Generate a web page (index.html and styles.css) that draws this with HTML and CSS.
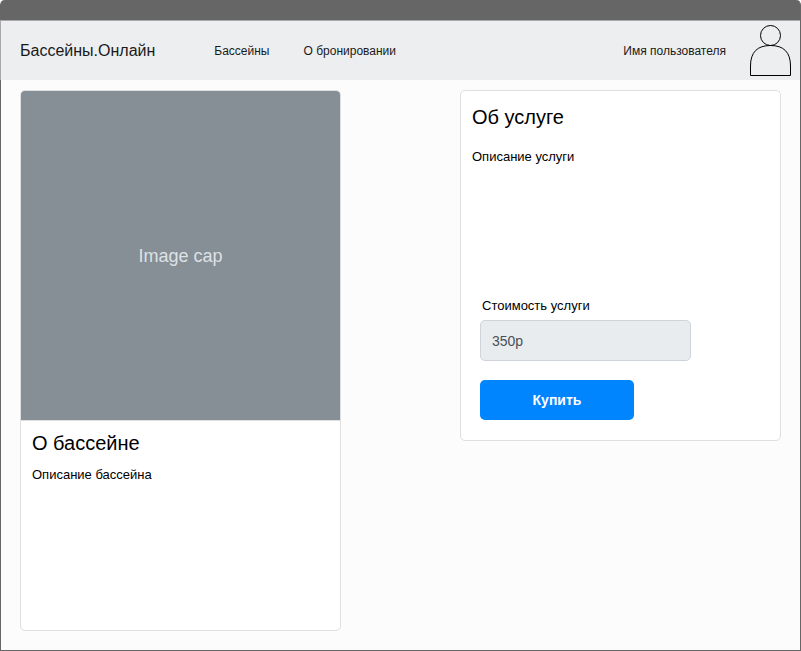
FILE: index.html
```html
<!DOCTYPE html>
<html lang="ru">
<head>
<meta charset="utf-8">
<meta name="viewport" content="width=device-width, initial-scale=1">
<title>Бассейны.Онлайн</title>
<link rel="stylesheet" href="styles.css">
</head>
<body>
<div class="window">
  <div class="titlebar"></div>
  <header class="navbar">
    <a class="brand" href="#">Бассейны.Онлайн</a>
    <nav class="menu">
      <a href="#">Бассейны</a>
      <a href="#">О бронировании</a>
    </nav>
    <a class="user" href="#">
      <span>Имя пользователя</span>
      <svg class="avatar" viewBox="0 0 41 51" width="41" height="51" fill="none" stroke="#000" aria-hidden="true">
        <circle cx="20.500" cy="10.500" r="10"/>
        <path d="M.5 50.500V41C.5 27 7.500 20.500 20.500 20.500S40.500 27 40.500 41V50.500Z"/>
      </svg>
    </a>
  </header>
  <main class="content">
    <article class="card pool">
      <div class="cover">Image cap</div>
      <div class="pool-body">
        <h2>О бассейне</h2>
        <p>Описание бассейна</p>
      </div>
    </article>
    <section class="card service">
      <h2>Об услуге</h2>
      <p class="description">Описание услуги</p>
      <form class="order">
        <label for="price">Стоимость услуги</label>
        <input id="price" type="text" value="350р" readonly>
        <button type="button">Купить</button>
      </form>
    </section>
  </main>
</div>
</body>
</html>
```
FILE: styles.css
```css
* {
  box-sizing: border-box;
}

body {
  margin: 0;
  background: #fff;
  color: #000;
  font: 13px/20px "Liberation Sans", Arial, sans-serif;
}

a {
  color: inherit;
  text-decoration: none;
}

h2,
p {
  margin: 0;
}

h2 {
  font-size: 20px;
  font-weight: 400;
  line-height: 24px;
}

.window {
  display: flex;
  flex-direction: column;
  min-height: 100vh;
  border: 1px solid #666;
  border-top: 0;
  border-radius: 5px 5px 0 0;
  background: #fcfcfc;
}

.titlebar {
  height: 20px;
  border-radius: 4px 4px 0 0;
  background: #666;
}

.navbar {
  display: flex;
  align-items: center;
  height: 60px;
  margin-left: -1px;
  padding: 0 9px 0 19px;
  border: solid #a9a9ab;
  border-width: 1px 0 0 1px;
  background: #edeef0;
  color: #1a1a1a;
  font-size: 12px;
}

.brand {
  font-size: 16px;
}

.menu {
  display: flex;
  gap: 34px;
  margin-left: 59px;
}

.user {
  display: flex;
  align-items: center;
  gap: 24px;
  margin-left: auto;
}

.avatar {
  display: block;
}

.content {
  display: grid;
  flex: 1;
  grid-template-columns: 1fr 1fr;
  gap: 119px;
  padding: 10px 19px 19px;
}

.card {
  border: 1px solid #dfdfdf;
  border-radius: 5px;
  background: #fff;
}

.pool {
  overflow: hidden;
}

.cover {
  display: flex;
  align-items: center;
  justify-content: center;
  height: 330px;
  border-bottom: 1px solid #dfdfdf;
  background: #868e96;
  color: #dee2e6;
  font-size: 18px;
}

.pool-body {
  display: grid;
  gap: 10px;
  padding: 10px 11px;
}

.service {
  align-self: start;
  padding: 14px 11px 20px;
}

.description {
  min-height: 149px;
  margin-top: 18px;
}

.order {
  display: flex;
  flex-direction: column;
  align-items: flex-start;
  padding: 0 8px;
}

.order label {
  margin-bottom: 4px;
  padding-left: 2px;
}

.order input {
  width: 75%;
  height: 41px;
  padding: 0 11px;
  border: 1px solid #ced4da;
  border-radius: 5px;
  background: #e9ecef;
  color: #495057;
  font: 14px "Liberation Sans", Arial, sans-serif;
}

.order button {
  width: 154px;
  height: 40px;
  margin-top: 19px;
  border: 0;
  border-radius: 5px;
  background: #0085ff;
  color: #fff;
  font: bold 14px "Liberation Sans", Arial, sans-serif;
}
```
